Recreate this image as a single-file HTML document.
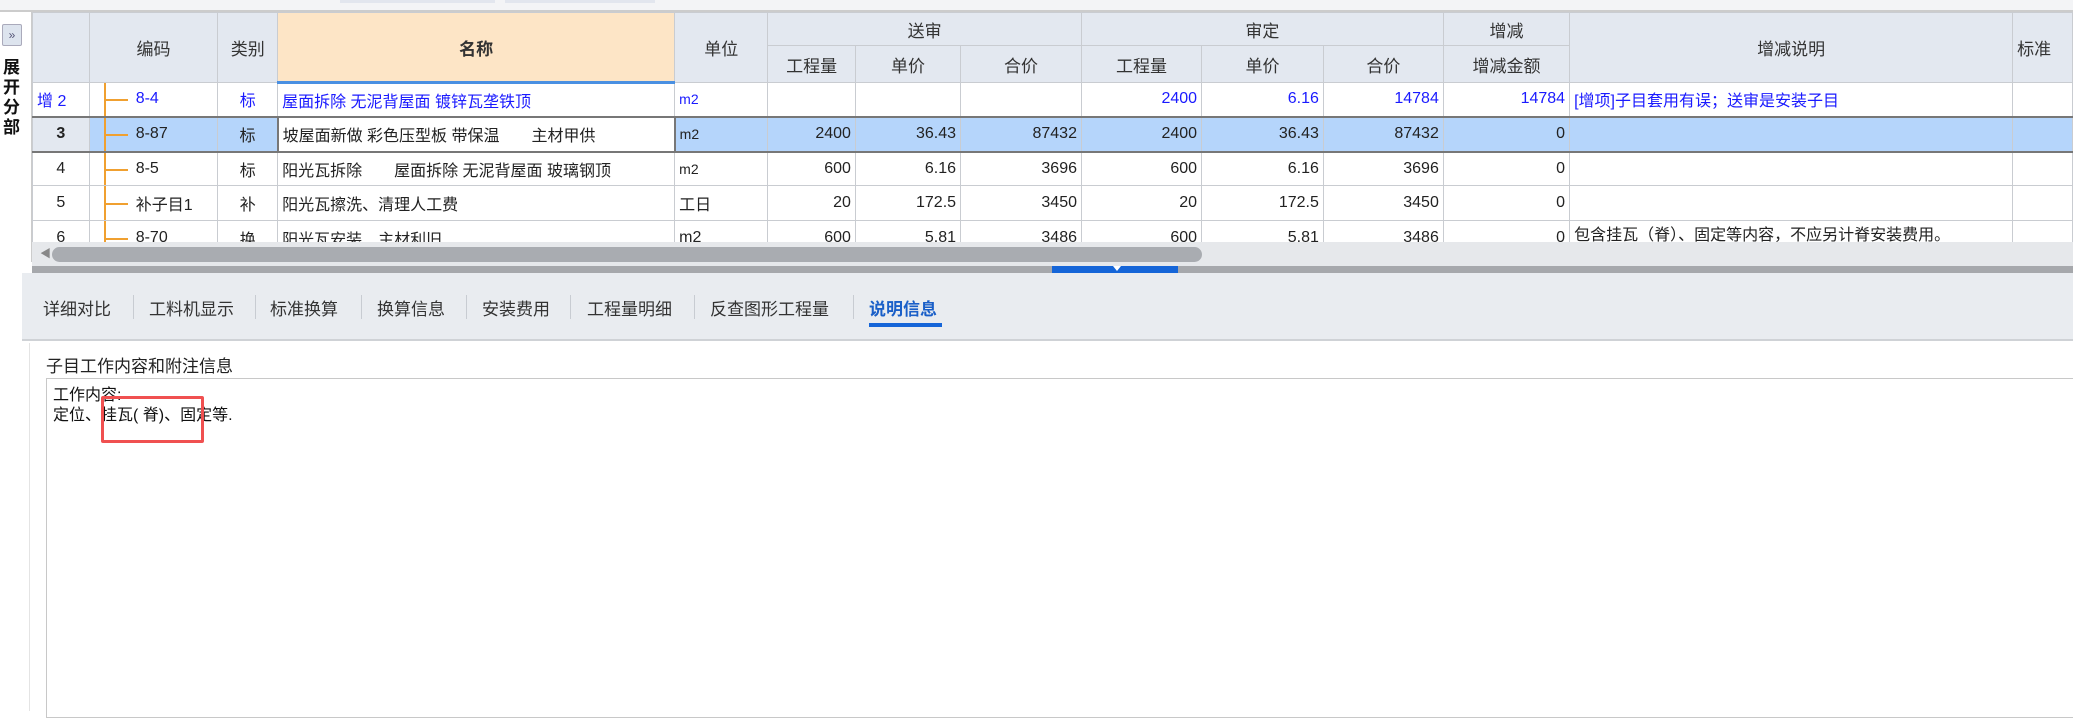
<!DOCTYPE html>
<html><head><meta charset="utf-8"><style>
*{margin:0;padding:0;box-sizing:border-box}
body{width:2073px;height:711px;overflow:hidden;background:#fff;position:relative;font-family:"Liberation Sans","Noto Sans CJK SC",sans-serif;font-size:16px;color:#222}
.abs{position:absolute}
table{border-collapse:collapse;table-layout:fixed;position:absolute;left:32px;top:12px}
td,th{border:1px solid #c9ccd1;white-space:nowrap;overflow:hidden;font-weight:normal;padding:0 4px}
th{background:#e3e8f0;font-size:17px;color:#333}
th.nm{background:#fde5c6;font-weight:bold;border-bottom:3px solid #4a90e2}
td{height:34px}
.r{text-align:right}.c{text-align:center}
.b{color:#1a1aff}
tr.sel td{background:#b5d5fb;border-top:2px solid #777;border-bottom:2px solid #777}
tr.sel td.nm{background:#fff;border:2px solid #777}
tr.sel td.num{background:#e3e8f0}
.tree{position:relative;padding-left:46px}
.tree:before{content:"";position:absolute;left:14px;top:0;bottom:0;border-left:2px solid #f0a030}
.tree:after{content:"";position:absolute;left:14px;width:24px;top:50%;border-top:2px solid #f0a030}
.tab{position:absolute;top:295px;font-size:17px;color:#333}
.sep{position:absolute;top:295px;width:1px;height:24px;background:#c8ccd2}
</style></head><body>
<div class="abs" style="left:0;top:0;width:2073px;height:10px;background:#f3f4f6"></div>
<div class="abs" style="left:340px;top:0;width:155px;height:3px;background:#e2e6ee"></div>
<div class="abs" style="left:505px;top:0;width:150px;height:3px;background:#e2e6ee"></div>
<div class="abs" style="left:0;top:10px;width:2073px;height:2px;background:#ccc"></div>
<div class="abs" style="left:2px;top:24px;width:20px;height:22px;background:#dde4ee;border:1px solid #aab;border-radius:2px;font-size:12px;color:#557;text-align:center;line-height:20px">»</div>
<div class="abs" style="left:3px;top:58px;width:20px;font-weight:bold;font-size:17px;line-height:20px;color:#111">展<br>开<br>分<br>部</div>
<div class="abs" style="left:31px;top:12px;width:1px;height:250px;background:#ccc"></div>
<table>
<colgroup><col style="width:57px"><col style="width:129px"><col style="width:60px"><col style="width:398px"><col style="width:94px"><col style="width:88px"><col style="width:106px"><col style="width:122px"><col style="width:121px"><col style="width:123px"><col style="width:121px"><col style="width:127px"><col style="width:444px"><col style="width:60px"></colgroup>
<tr style="height:33px"><th rowspan="2"></th><th rowspan="2">编码</th><th rowspan="2">类别</th><th rowspan="2" class="nm">名称</th><th rowspan="2">单位</th><th colspan="3">送审</th><th colspan="3">审定</th><th>增减</th><th rowspan="2">增减说明</th><th rowspan="2" style="text-align:left">标准</th></tr>
<tr style="height:37px"><th>工程量</th><th>单价</th><th>合价</th><th>工程量</th><th>单价</th><th>合价</th><th>增减金额</th></tr>
<tr class="b"><td class="b">增 2</td><td class="tree b">8-4</td><td class="c b">标</td><td class="b">屋面拆除 无泥背屋面 镀锌瓦垄铁顶</td><td class="b" style="font-size:14px">m2</td><td></td><td></td><td></td><td class="r b">2400</td><td class="r b">6.16</td><td class="r b">14784</td><td class="r b">14784</td><td class="b">[增项]子目套用有误；送审是安装子目</td><td></td></tr>
<tr class="sel" style="height:35px"><td class="c num" style="font-weight:bold">3</td><td class="tree">8-87</td><td class="c">标</td><td class="nm">坡屋面新做 彩色压型板 带保温　　主材甲供</td><td style="font-size:14px">m2</td><td class="r">2400</td><td class="r">36.43</td><td class="r">87432</td><td class="r">2400</td><td class="r">36.43</td><td class="r">87432</td><td class="r">0</td><td></td><td></td></tr>
<tr><td class="c">4</td><td class="tree">8-5</td><td class="c">标</td><td>阳光瓦拆除　　屋面拆除 无泥背屋面 玻璃钢顶</td><td style="font-size:14px">m2</td><td class="r">600</td><td class="r">6.16</td><td class="r">3696</td><td class="r">600</td><td class="r">6.16</td><td class="r">3696</td><td class="r">0</td><td></td><td></td></tr>
<tr style="height:35px"><td class="c">5</td><td class="tree">补子目1</td><td class="c">补</td><td>阳光瓦擦洗、清理人工费</td><td>工日</td><td class="r">20</td><td class="r">172.5</td><td class="r">3450</td><td class="r">20</td><td class="r">172.5</td><td class="r">3450</td><td class="r">0</td><td></td><td></td></tr>
<tr style="height:35px"><td class="c">6</td><td class="tree">8-70</td><td class="c">换</td><td>阳光瓦安装　主材利旧</td><td>m2</td><td class="r">600</td><td class="r">5.81</td><td class="r">3486</td><td class="r">600</td><td class="r">5.81</td><td class="r">3486</td><td class="r">0</td><td style="vertical-align:top">包含挂瓦（脊）、固定等内容，不应另计脊安装费用。</td><td></td></tr>
</table>
<div class="abs" style="left:32px;top:242px;width:2041px;height:24px;background:#e6e8eb"></div>
<div class="abs" style="left:40px;top:247px;width:6px;height:14px;color:#888;font-size:11px;line-height:14px">◀</div>
<div class="abs" style="left:52px;top:247px;width:1150px;height:15px;background:#a9acb1;border-radius:8px"></div>
<div class="abs" style="left:32px;top:266px;width:2041px;height:7px;background:#a6a8ac"></div>
<div class="abs" style="left:1052px;top:266px;width:126px;height:7px;background:#1565d8"></div>
<div class="abs" style="left:1113px;top:266px;width:0;height:0;border-left:4px solid transparent;border-right:4px solid transparent;border-top:5px solid #fff"></div>
<div class="abs" style="left:22px;top:273px;width:2051px;height:68px;background:#e9ecf0;border-bottom:2px solid #cfd2d6"></div>
<div class="tab" style="left:43px">详细对比</div><div class="sep" style="left:133px"></div>
<div class="tab" style="left:149px">工料机显示</div><div class="sep" style="left:255px"></div>
<div class="tab" style="left:270px">标准换算</div><div class="sep" style="left:361px"></div>
<div class="tab" style="left:377px">换算信息</div><div class="sep" style="left:466px"></div>
<div class="tab" style="left:482px">安装费用</div><div class="sep" style="left:570px"></div>
<div class="tab" style="left:587px">工程量明细</div><div class="sep" style="left:694px"></div>
<div class="tab" style="left:710px">反查图形工程量</div><div class="sep" style="left:853px"></div>
<div class="tab" style="left:869px;color:#1a5fc8;font-weight:bold">说明信息</div>
<div class="abs" style="left:869px;top:323px;width:73px;height:4px;background:#1565d8"></div>
<div class="abs" style="left:29px;top:343px;width:1px;height:368px;background:#e4e4e4"></div>
<div class="abs" style="left:46px;top:352px;font-size:17px;color:#222">子目工作内容和附注信息</div>
<div class="abs" style="left:46px;top:378px;width:2040px;height:340px;border:1px solid #c8c8c8;border-right:none"></div>
<div class="abs" style="left:53px;top:386px;font-size:16px;line-height:20px;color:#111">工作内容:<br>定位、挂瓦( 脊)、固定等.</div>
<div class="abs" style="left:101px;top:396px;width:103px;height:47px;border:3px solid #f05050;border-radius:2px"></div>
</body></html>
